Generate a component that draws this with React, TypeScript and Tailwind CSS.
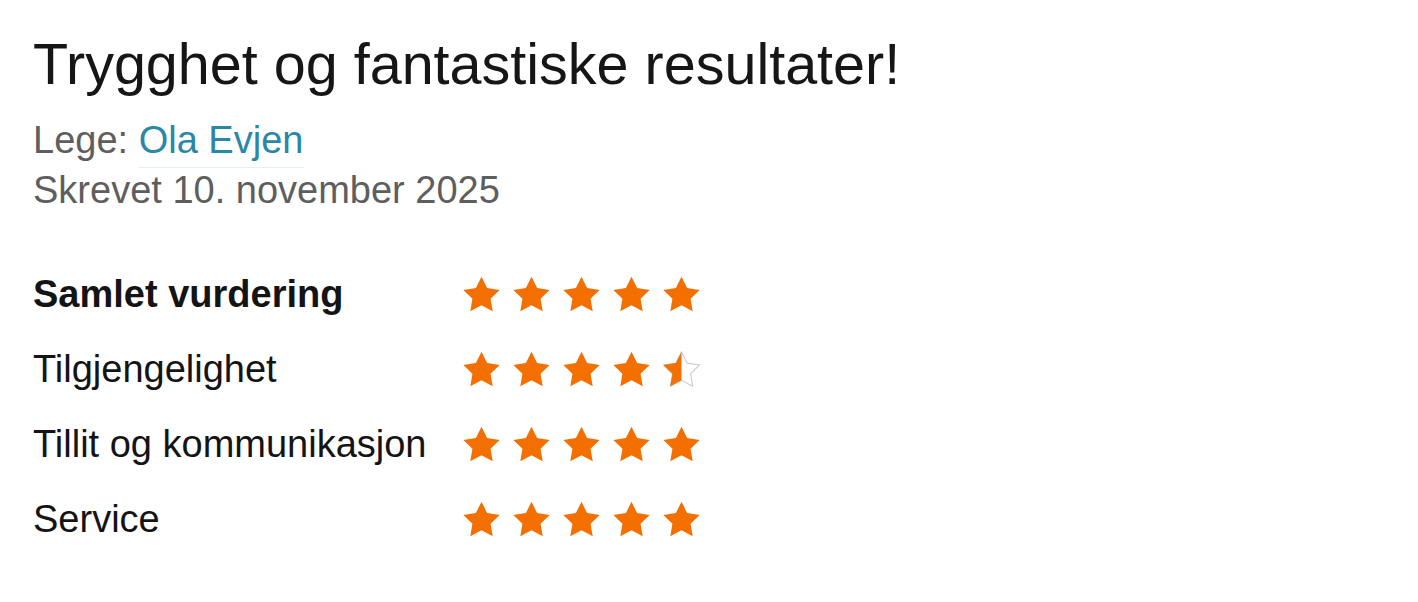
import React from "react";

const STAR = "10,0 13.09,6.26 20,7.27 15,12.14 16.18,19.02 10,15.77 3.82,19.02 5,12.14 0,7.27 6.91,6.26";

function Star({ fill }: { fill: number }) {
  const id = React.useId();
  return (
    <svg width="37" height="36" viewBox="-0.2 -0.3 20.4 19.6" className="block shrink-0">
      <defs>
        <clipPath id={id}>
          <rect x="-1" y="-1" width={1 + 20 * fill} height="22" />
        </clipPath>
      </defs>
      {fill < 1 && (
        <polygon points={STAR} fill="none" stroke="#c9c9c9" strokeWidth="0.6" strokeLinejoin="round" />
      )}
      <polygon points={STAR} fill="#f26f00" clipPath={fill < 1 ? `url(#${id})` : undefined} />
    </svg>
  );
}

function Stars({ value }: { value: number }) {
  return (
    <div className="flex gap-[13px]">
      {[0, 1, 2, 3, 4].map((i) => (
        <Star key={i} fill={Math.max(0, Math.min(1, value - i))} />
      ))}
    </div>
  );
}

const ratings = [
  { label: "Samlet vurdering", value: 5, bold: true },
  { label: "Tilgjengelighet", value: 4.5 },
  { label: "Tillit og kommunikasjon", value: 5 },
  { label: "Service", value: 5 },
];

export default function App() {
  return (
    <div
      className="min-h-screen bg-white pl-[33px] pt-[31px]"
      style={{ fontFamily: '"Liberation Sans", Arial, sans-serif' }}
    >
      <h1 className="text-[57.5px] leading-[66px] text-[#161616]">Trygghet og fantastiske resultater!</h1>
      <div className="mt-[18px] text-[38px] leading-[50px] text-[#5e5e5e]">
        <div>
          Lege:{" "}
          <a className="text-[#2a87a8] underline decoration-[#e3f1f6] decoration-1 underline-offset-[14px]">
            Ola Evjen
          </a>
        </div>
        <div>Skrevet 10. november 2025</div>
      </div>
      <div className="mt-[41px] grid grid-cols-[430px_auto] justify-start">
        {ratings.map((r) => (
          <React.Fragment key={r.label}>
            <div
              className={`flex h-[75px] items-center text-[38px] leading-[50px] text-[#141414] ${
                r.bold ? "font-bold" : ""
              }`}
            >
              <span>{r.label}</span>
            </div>
            <div className="flex h-[75px] items-center">
              <Stars value={r.value} />
            </div>
          </React.Fragment>
        ))}
      </div>
    </div>
  );
}
